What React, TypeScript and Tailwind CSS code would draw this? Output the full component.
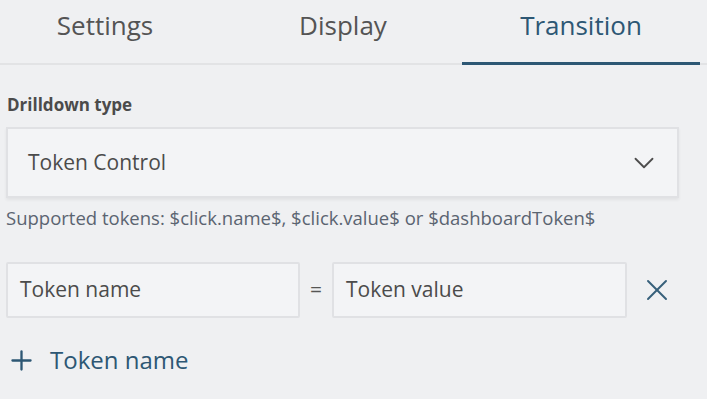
import { ChevronDown, Plus, X } from "lucide-react";

const tabs = ["Settings", "Display", "Transition"];

export default function App() {
	const active = 2;
	return (
		<div className="w-[707px] h-[399px] overflow-hidden bg-[#eff0f2] font-['Open_Sans',_sans-serif] text-[#4b4b4b]">
			<div className="flex h-[65px] border-b-2 border-[#e2e3e5] -ml-[14px] w-[728px] items-stretch">
				{tabs.map((tab, index) => (
					<div
						key={tab}
						className={
							index === active
								? "w-[238px] shrink-0 flex justify-center pt-[7px] text-[26px] leading-[36px] text-[#2d5774] border-b-[3px] border-[#2d5774] -mb-[2px]"
								: "w-[238px] shrink-0 flex justify-center pt-[7px] text-[26px] leading-[36px] text-[#545454]"
						}>
						{tab}
					</div>
				))}
			</div>
			<div className="px-[6px] pt-[28px]">
				<p className="text-[17px] font-bold leading-[24px] pl-[1px] text-[#4b4b4b]">
					Drilldown type
				</p>
				<div className="mt-[10px] w-[673px] h-[71px] flex items-center justify-between border-2 border-[#e0e1e4] bg-[#f3f4f6] shadow-[0_2px_3px_rgba(0,0,0,0.06)] pl-[20px] pr-[16px]">
					<span className="text-[21px]">Token Control</span>
					<ChevronDown size={34} strokeWidth={1.3} className="text-[#4d4d4d]" />
				</div>
				<p className="mt-[7px] text-[18.5px] leading-[26px] text-[#5b6471]">
					Supported tokens: $click.name$, $click.value$ or $dashboardToken$
				</p>
				<div className="mt-[31px] flex items-center">
					<div className="w-[294px] h-[56px] flex items-center border-2 border-[#e0e1e4] bg-[#f3f4f6] rounded-[2px] pl-[12px] text-[21px]">
						Token name
					</div>
					<span className="w-[32px] text-center text-[21px] text-[#555]">=</span>
					<div className="w-[295px] h-[56px] flex items-center border-2 border-[#e0e1e4] bg-[#f3f4f6] rounded-[2px] pl-[12px] text-[21px]">
						Token value
					</div>
					<X size={36} strokeWidth={1.3} className="ml-[12px] text-[#37607b]" />
				</div>
				<div className="mt-[26px] flex items-center text-[#2d5774]">
					<Plus size={31} strokeWidth={1.8} />
					<span className="ml-[13px] text-[24px] leading-[32px]">Token name</span>
				</div>
			</div>
		</div>
	);
}
